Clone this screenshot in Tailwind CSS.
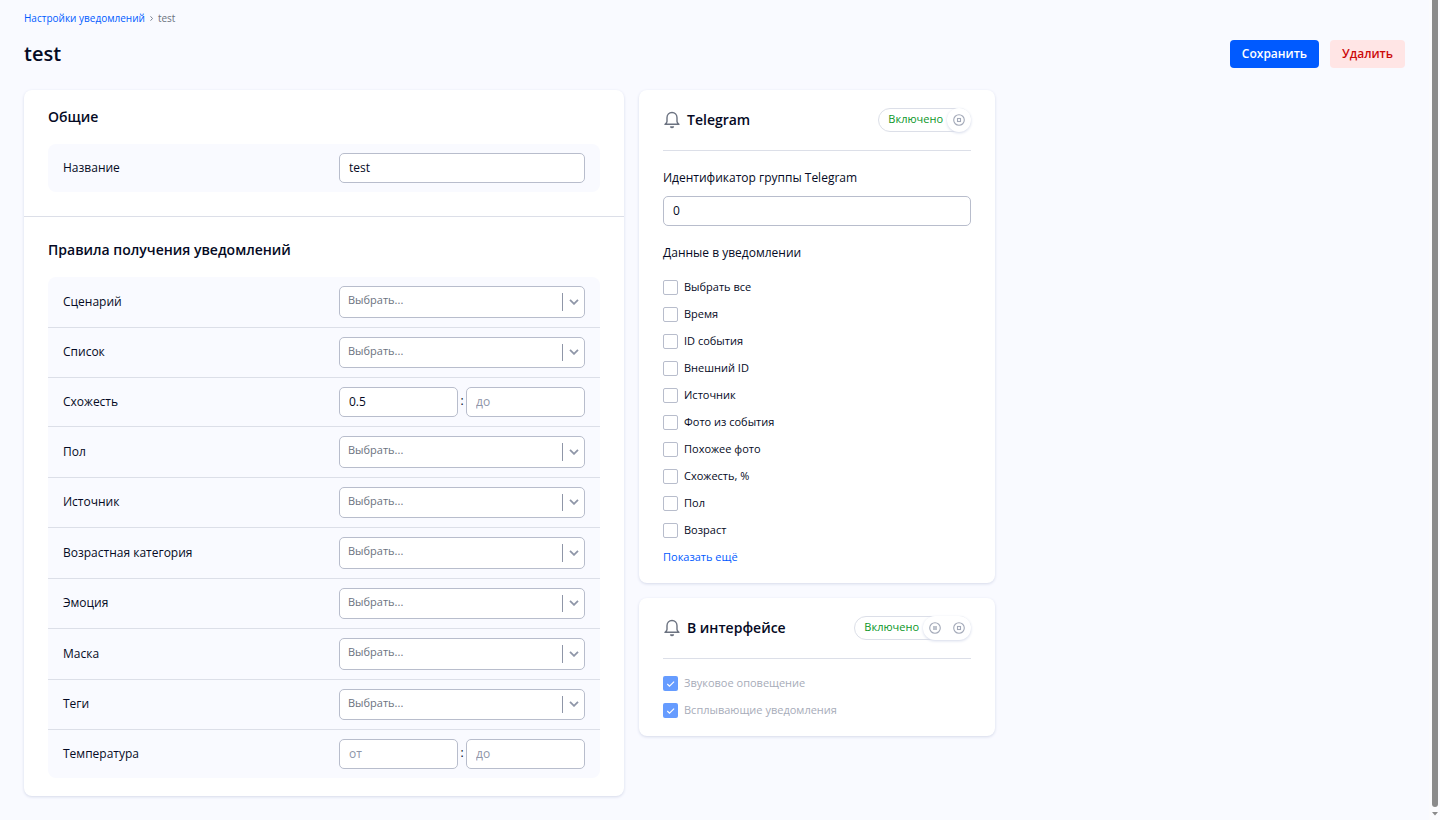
<!DOCTYPE html>
<html lang="ru">
<head>
  <meta charset="UTF-8" />
  <meta name="viewport" content="width=device-width, initial-scale=1.0"/>
  <title>test | Настройки уведомлений</title>
  <script src="https://cdn.jsdelivr.net/npm/@tailwindcss/browser@4"></script>
</head>
<body class="flex min-h-screen bg-[#f9faff] font-['Open_Sans',sans-serif] text-xs text-[#050a24]">
  <!-- Icons -->
  <svg class="hidden">
    <symbol id="bell" viewBox="0 0 18 18" fill="none" stroke="currentColor" stroke-width="1.4" stroke-linecap="round" stroke-linejoin="round">
      <path d="M2 13.300h14c-1.100-.6-1.900-1.500-2-2.900V6.700C14 3.600 11.900 1.500 9 1.500S4 3.600 4 6.700v3.700c-.1 1.400-.9 2.300-2 2.900z"/>
      <path d="M7.600 15.900c.7.900 2.100.9 2.800 0z" fill="currentColor"/>
    </symbol>
    <symbol id="chevron" viewBox="0 0 10 6" fill="none" stroke="currentColor" stroke-width="1.8">
      <path d="M1 .8l4 4 4-4"/>
    </symbol>
    <symbol id="stop" viewBox="0 0 12 12" fill="none" stroke="currentColor" stroke-width="1.1">
      <circle cx="6" cy="6" r="5.300"/>
      <rect x="4.500" y="4.500" width="3" height="3"/>
    </symbol>
    <symbol id="pause" viewBox="0 0 12 12" fill="none" stroke="currentColor" stroke-width="1.1">
      <circle cx="6" cy="6" r="5.300"/>
      <rect x="4" y="4" width="4" height="4" fill="currentColor" fill-opacity=".7" stroke="none"/>
    </symbol>
    <symbol id="check" viewBox="0 0 15 15" fill="none" stroke="currentColor" stroke-width="1.1">
      <path d="M4.300 8l2.200 2.200 4.600-4.600"/>
    </symbol>
  </svg>

  <main class="min-w-0 flex-1 px-6 pt-[10px] pb-6">
    <nav class="flex h-4 items-center gap-[5px] text-[10px] leading-4">
      <a href="#" class="text-[#005aff]">Настройки уведомлений</a>
      <svg class="h-[5px] w-[3px] text-[#7a8090]" viewBox="0 0 3 5" fill="none" stroke="currentColor"><path d="M.5.3l2 2.200-2 2.200"/></svg>
      <span class="text-[#6b7280]">test</span>
    </nav>

    <header class="mt-[14px] flex h-7 items-center justify-between">
      <h1 class="text-xl font-semibold">test</h1>
      <div class="flex gap-[11px]">
        <button type="button" class="h-7 rounded bg-[#005aff] px-3 font-semibold text-white">Сохранить</button>
        <button type="button" class="h-7 rounded bg-[#ffe5e5] px-3 font-semibold text-[#cc0a0a]">Удалить</button>
      </div>
    </header>

    <div class="mt-[22px] flex items-start gap-[15px]">
      <!-- General settings and rules -->
      <form class="w-[600px] rounded-lg bg-white shadow-[0_1px_3px_#d5daea]">
        <section class="border-b border-[#dcdfe8] px-6 pt-[17px] pb-6">
          <h2 class="text-sm leading-5 font-semibold">Общие</h2>
          <div class="mt-[17px] flex items-center justify-between rounded-lg bg-[#f9faff] px-[15px] py-[9px]">
            <label for="name">Название</label>
            <input id="name" type="text" value="test" class="h-[30px] w-[246px] rounded-[5px] border border-[#b8bdcc] bg-white px-[9px] pb-[2px]">
          </div>
        </section>

        <section class="px-6 pt-[23px] pb-[18px]">
          <h2 class="text-sm leading-5 font-semibold">Правила получения уведомлений</h2>
          <div id="rules" class="mt-[17px] flex min-h-[501px] flex-col divide-y divide-[#dcdfe8] rounded-lg bg-[#f9faff]"></div>
        </section>
      </form>

      <div class="w-[356px] space-y-[15px]">
        <!-- Telegram -->
        <section class="rounded-lg bg-white px-6 py-[18px] shadow-[0_1px_3px_#d5daea]">
          <div class="flex items-center border-b border-[#dcdfe8] pb-[18px]">
            <svg class="size-[18px] text-[#6b7280]"><use href="#bell"/></svg>
            <h2 class="ml-[6px] flex-1 text-sm leading-5 font-semibold">Telegram</h2>
            <div class="flex h-6 items-center gap-1 rounded-full border border-[#dcdfe8] pl-[9px] text-[11px] text-[#0a9628]">
              <span class="pb-[2px]">Включено</span>
              <div class="-my-px -mr-px flex rounded-full bg-white text-[#a3a9b8] shadow-[0_1px_3px_#d5daea]">
                <button type="button" aria-label="Остановить" class="flex size-6 items-center justify-center"><svg class="size-3"><use href="#stop"/></svg></button>
              </div>
            </div>
          </div>
          <label for="group" class="mt-[18px] block leading-[18px]">Идентификатор группы Telegram</label>
          <input id="group" type="text" value="0" class="mt-[9px] block h-[30px] w-full rounded-[5px] border border-[#b8bdcc] bg-white px-[9px] pb-[2px]">
          <h3 class="mt-[18px] leading-[18px]">Данные в уведомлении</h3>
          <div id="fields" class="mt-[18px] flex flex-col gap-3 text-[11px] leading-[13px]"></div>
          <a href="#" class="mt-3 block pb-[2px] text-[11px] leading-[13px] text-[#005aff]">Показать ещё</a>
        </section>

        <!-- Interface -->
        <section class="rounded-lg bg-white px-6 py-[18px] shadow-[0_1px_3px_#d5daea]">
          <div class="flex items-center border-b border-[#dcdfe8] pb-[18px]">
            <svg class="size-[18px] text-[#6b7280]"><use href="#bell"/></svg>
            <h2 class="ml-[6px] flex-1 text-sm leading-5 font-semibold">В интерфейсе</h2>
            <div class="flex h-6 items-center gap-1 rounded-full border border-[#dcdfe8] pl-[9px] text-[11px] text-[#0a9628]">
              <span class="pb-[2px]">Включено</span>
              <div class="-my-px -mr-px flex rounded-full bg-white text-[#a3a9b8] shadow-[0_1px_3px_#d5daea]">
                <button type="button" aria-label="Приостановить" class="flex size-6 items-center justify-center"><svg class="size-3"><use href="#pause"/></svg></button>
                <button type="button" aria-label="Остановить" class="flex size-6 items-center justify-center"><svg class="size-3"><use href="#stop"/></svg></button>
              </div>
            </div>
          </div>
          <div id="interfaceFields" class="mt-[17px] flex flex-col gap-3 text-[11px] leading-[13px]"></div>
        </section>
      </div>
    </div>
  </main>

  <!-- Scrollbar -->
  <div class="sticky top-0 flex h-screen w-[11px] flex-col bg-[#fbfbfd] pr-[2px] pb-1 pl-[3px]">
    <div class="flex-1 rounded-b-full bg-[#8b8b8b]"></div>
    <svg class="mt-[5px] h-1 w-[6px]" viewBox="0 0 6 4"><path d="M0 0h6L3 3.500z" fill="#8b8b8b"/></svg>
  </div>

  <!-- Script -->
  <script>
    const rules = [
      { id: 'scenario', label: 'Сценарий' },
      { id: 'list', label: 'Список' },
      { id: 'similarity', label: 'Схожесть', range: true, from: '0.5' },
      { id: 'sex', label: 'Пол' },
      { id: 'source', label: 'Источник' },
      { id: 'age', label: 'Возрастная категория' },
      { id: 'emotion', label: 'Эмоция' },
      { id: 'mask', label: 'Маска' },
      { id: 'tags', label: 'Теги' },
      { id: 'temperature', label: 'Температура', range: true, from: '' }
    ];

    const fields = ['Выбрать все', 'Время', 'ID события', 'Внешний ID', 'Источник', 'Фото из события', 'Похожее фото', 'Схожесть, %', 'Пол', 'Возраст'];
    const interfaceFields = ['Звуковое оповещение', 'Всплывающие уведомления'];

    function selectRow(rule) {
      return `
        <div class="flex grow justify-between px-[15px] py-[9px]">
          <label for="${rule.id}" class="self-center">${rule.label}</label>
          <div class="relative flex min-h-[31px] w-[246px]">
            <select id="${rule.id}" class="w-full appearance-none rounded-[5px] border border-[#b8bdcc] bg-white px-2 pb-[2px] text-[11px] text-[#6b7280]">
              <option>Выбрать...</option>
            </select>
            <span class="pointer-events-none absolute inset-y-[7px] right-[6px] flex items-center border-l border-[#8f96a8] pl-[6px] text-[#8f96a8]">
              <svg class="h-[6px] w-[10px]"><use href="#chevron"/></svg>
            </span>
          </div>
        </div>`;
    }

    function rangeRow(rule) {
      return `
        <div class="flex items-center justify-between px-[15px] py-[9px]">
          <label for="${rule.id}">${rule.label}</label>
          <div class="flex w-[246px] justify-between">
            <input id="${rule.id}" type="text" value="${rule.from}" placeholder="от" class="h-[30px] w-[119px] rounded-[5px] border border-[#b8bdcc] bg-white px-[9px] pb-[2px] placeholder:text-[#8f96a8]">
            <span class="self-center pb-[2px]">:</span>
            <input type="text" placeholder="до" aria-label="${rule.label}, до" class="h-[30px] w-[119px] rounded-[5px] border border-[#b8bdcc] bg-white px-[9px] pb-[2px] placeholder:text-[#8f96a8]">
          </div>
        </div>`;
    }

    function checkbox(label) {
      return `
        <label class="flex gap-[6px]">
          <input type="checkbox" class="size-[15px] appearance-none rounded-[2px] border border-[#b8bdcc] bg-white checked:border-[#005aff] checked:bg-[#005aff]">
          ${label}
        </label>`;
    }

    function lockedCheckbox(label) {
      return `
        <label class="relative flex gap-[6px] text-[#a7acb9]">
          <input type="checkbox" checked disabled class="size-[15px] appearance-none rounded-[2px] bg-[#669cff]">
          <svg class="pointer-events-none absolute top-0 left-0 size-[15px] text-white"><use href="#check"/></svg>
          ${label}
        </label>`;
    }

    document.getElementById('rules').innerHTML = rules.map(r => r.range ? rangeRow(r) : selectRow(r)).join('');
    document.getElementById('fields').innerHTML = fields.map(checkbox).join('');
    document.getElementById('interfaceFields').innerHTML = interfaceFields.map(lockedCheckbox).join('');
  </script>
</body>
</html>
